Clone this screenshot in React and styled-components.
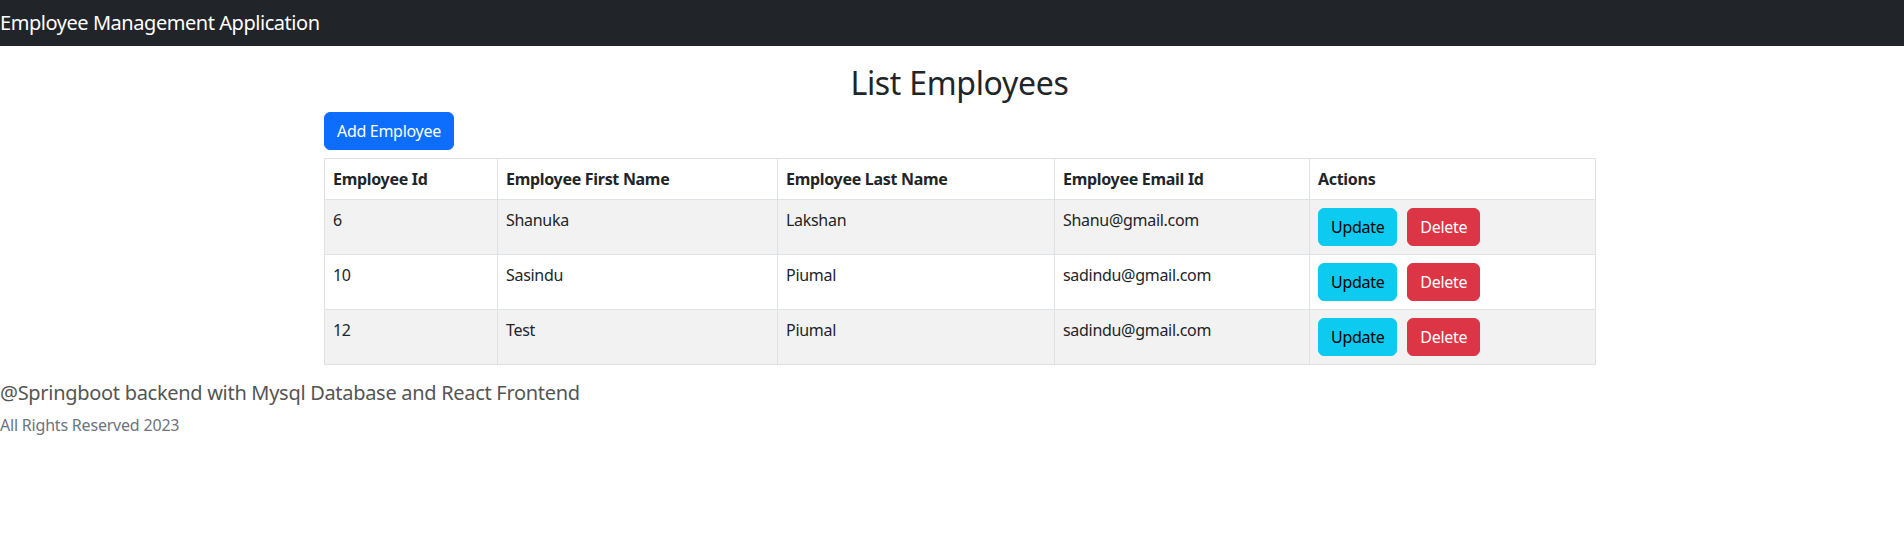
import React from 'react';
import styled, { createGlobalStyle } from 'styled-components';

const GlobalStyle = createGlobalStyle`
    body {
        margin: 0;
        background: #ffffff;
        color: #212529;
        font-family: "Noto Sans", "Open Sans", sans-serif;
        font-size: 16px;
        line-height: 1.5;
    }
`

const Navbar = styled.header`
    display: flex;
    align-items: center;
    height: 46px;
    background: #212529;
`

const Brand = styled.span`
    color: #ffffff;
    font-size: 20px;
    letter-spacing: -0.45px;
`

const Container = styled.main`
    width: 1271px;
    margin-left: calc(50% - 628px);
    padding-top: 18px;
`

const Title = styled.h2`
    margin: 0 0 10px;
    font-size: 32px;
    font-weight: 400;
    line-height: 1.2;
    text-align: center;
    letter-spacing: -0.3px;
`

const Button = styled.button`
    display: inline-block;
    padding: 6px 12px;
    border: 1px solid ${(p) => p.bg};
    border-radius: 6px;
    background: ${(p) => p.bg};
    color: ${(p) => p.fg};
    font-family: inherit;
    font-size: 16px;
    line-height: 24px;
    letter-spacing: -0.3px;
    cursor: pointer;
    & + & {
        margin-left: 10px;
    }
`

const Table = styled.table`
    width: 100%;
    margin-top: 8px;
    border-collapse: collapse;
    table-layout: fixed;
`

const HeadCell = styled.th`
    padding: 8px;
    border: 1px solid #dee2e6;
    text-align: left;
    vertical-align: top;
    font-weight: 700;
    letter-spacing: -0.3px;
`

const Row = styled.tr`
    background: ${(p) => (p.striped ? '#f2f2f2' : '#ffffff')};
`

const Cell = styled.td`
    padding: 8px;
    border: 1px solid #dee2e6;
    vertical-align: top;
    letter-spacing: -0.3px;
    white-space: nowrap;
`

const Footer = styled.footer`
    margin-top: 15px;
`

const Credit = styled.div`
    color: #555555;
    font-size: 20px;
    line-height: 26px;
    letter-spacing: -0.3px;
`

const Rights = styled.div`
    margin-top: 7px;
    color: #6c757d;
    font-size: 16px;
    line-height: 24px;
    letter-spacing: -0.2px;
`

const employees = [
    { id: 6, firstName: 'Shanuka', lastName: 'Lakshan', email: 'Shanu@gmail.com' },
    { id: 10, firstName: 'Sasindu', lastName: 'Piumal', email: 'sadindu@gmail.com' },
    { id: 12, firstName: 'Test', lastName: 'Piumal', email: 'sadindu@gmail.com' },
]

const columns = [
    { label: 'Employee Id', width: 173 },
    { label: 'Employee First Name', width: 280 },
    { label: 'Employee Last Name', width: 277 },
    { label: 'Employee Email Id', width: 255 },
    { label: 'Actions', width: 286 },
]

const App = () => {
    return (
        <>
            <GlobalStyle />
            <Navbar>
                <Brand>Employee Management Application</Brand>
            </Navbar>
            <Container>
                <Title>List Employees</Title>
                <Button bg="#0d6efd" fg="#ffffff">Add Employee</Button>
                <Table>
                    <colgroup>
                        {columns.map((c) => <col key={c.label} style={{ width: c.width }} />)}
                    </colgroup>
                    <thead>
                        <tr>
                            {columns.map((c) => <HeadCell key={c.label}>{c.label}</HeadCell>)}
                        </tr>
                    </thead>
                    <tbody>
                        {employees.map((emp, i) => (
                            <Row key={emp.id} striped={i % 2 === 0}>
                                <Cell>{emp.id}</Cell>
                                <Cell>{emp.firstName}</Cell>
                                <Cell>{emp.lastName}</Cell>
                                <Cell>{emp.email}</Cell>
                                <Cell>
                                    <Button bg="#0dcaf0" fg="#000000">Update</Button>
                                    <Button bg="#dc3545" fg="#ffffff">Delete</Button>
                                </Cell>
                            </Row>
                        ))}
                    </tbody>
                </Table>
            </Container>
            <Footer>
                <Credit>@Springboot backend with Mysql Database and React Frontend</Credit>
                <Rights>All Rights Reserved 2023</Rights>
            </Footer>
        </>
    );
}

export default App;
